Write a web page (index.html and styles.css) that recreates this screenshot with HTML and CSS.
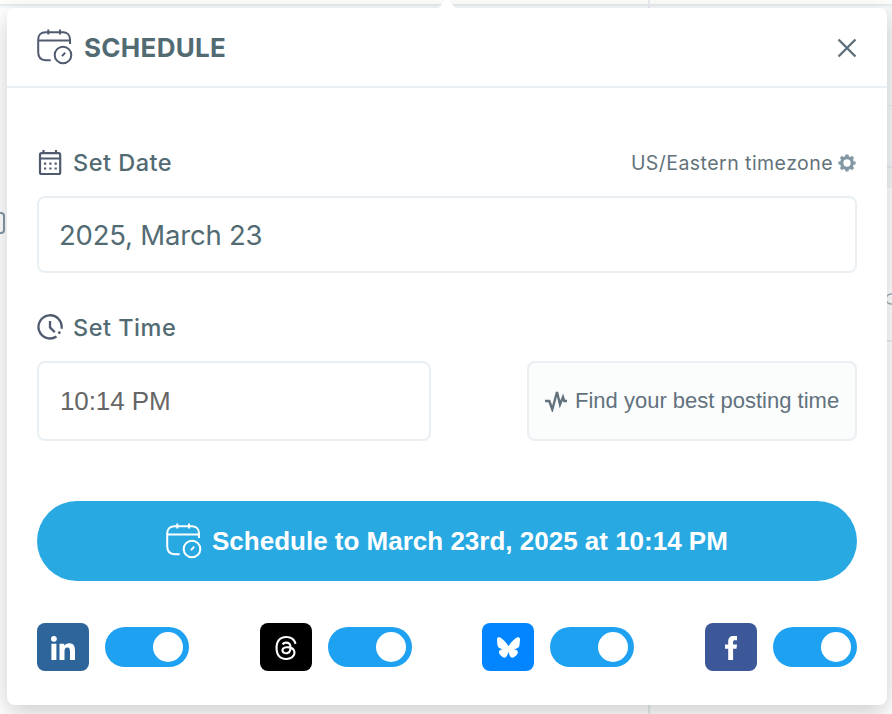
FILE: index.html
```html
<!DOCTYPE html>
<html lang="en">
<head>
<meta charset="utf-8">
<title>Schedule</title>
<link rel="stylesheet" href="styles.css">
</head>
<body>
<svg class="backdrop" width="892" height="714" viewBox="0 0 892 714" aria-hidden="true">
  <path fill="#fdfdfb" d="M0 0h892v4H0z"/>
  <path fill="#f6f8fa" d="M0 6h892v2H0zM886 8h6v159h-6z"/>
  <path fill="#e7edf0" d="M0 4h892v2H0zM648 0h2v714h-2zM880 105h12v1h-12zM880 166h12v2h-12zM880 340h12v2h-12z"/>
  <path fill="#f4f6f8" d="M880 168h12v20h-12z"/>
  <rect x="-12" y="213" width="16" height="20" rx="3" fill="none" stroke="#8297a6" stroke-width="2"/>
  <circle cx="891" cy="299" r="5" fill="none" stroke="#a0b0bb" stroke-width="1.5"/>
</svg>
<svg class="symbols" aria-hidden="true">
  <symbol id="schedule" viewBox="0 0 36 36">
    <g fill="none" stroke="currentColor" stroke-width="2">
      <path d="M33 15V10.500C33 6 30 3.200 26 3.200H8.500C4 3.200 1.200 6 1.200 10.500V23c0 5.500 2.500 8.200 7.500 8.200h5M1.200 11.500H33M11.300.500v5M23 .500v5"/>
      <circle cx="26" cy="26" r="8.300"/>
      <path d="M25 27.200l3.200-3.600"/>
    </g>
  </symbol>
</svg>
<main class="card">
  <header class="header">
    <svg class="icon-schedule" width="36" height="36"><use href="#schedule"/></svg>
    <h1 class="title">SCHEDULE</h1>
    <svg class="close" width="20" height="20" viewBox="0 0 20 20"><path d="M1.500 1.500l17 17M18.500 1.500l-17 17" fill="none" stroke="currentColor" stroke-width="2.300"/></svg>
  </header>
  <div class="body">
    <div class="label-row">
      <svg class="label-icon" width="26" height="26" viewBox="0 0 26 26">
        <g fill="none" stroke="currentColor" stroke-width="2.200">
          <rect x="3" y="3.200" width="20.200" height="20.800" rx="1.500"/>
          <path d="M3 8.500h20.500M6.500 0v4M19 0v4"/>
          <path d="M7 13.700h2.200m3.100 0h2.200m3.100 0h2.200M7 18.500h2.200m3.100 0h2.200m3.100 0h2.200"/>
        </g>
      </svg>
      <span class="label">Set Date</span>
      <span class="zone">US/Eastern timezone</span>
      <svg class="gear" width="18" height="18" viewBox="0 0 18 18">
        <circle cx="9" cy="9" r="5.300" fill="none" stroke="currentColor" stroke-width="3.300"/>
        <g stroke="currentColor" stroke-width="3.200"><path d="M9 .4v3M9 14.600v3M.4 9h3M14.600 9h3M2.900 2.900l2 2M13.100 13.100l2 2M2.900 15.100l2-2M13.100 4.900l2-2"/></g>
      </svg>
    </div>
    <div class="field date">2025, March 23</div>
    <div class="label-row time-label">
      <svg class="label-icon" width="26" height="26" viewBox="0 0 26 26">
        <path d="M19.500 22.500A11.600 11.600 0 1 1 24.500 14.800M13 7v6.400l4.800 4.800" fill="none" stroke="currentColor" stroke-width="2.300"/>
        <circle cx="22.300" cy="18.700" r="1.400" fill="currentColor"/>
      </svg>
      <span class="label">Set Time</span>
    </div>
    <div class="time-row">
      <div class="field time">10:14 PM</div>
      <div class="find">
        <svg width="22" height="22" viewBox="0 0 22 22"><path d="M0 11h4.300l3 8.500L12 2l3 12.500 3-7.500 1.300 4H22" fill="none" stroke="currentColor" stroke-width="2.400"/></svg>
        <span class="find-text">Find your best posting time</span>
      </div>
    </div>
    <div class="submit">
      <svg width="36" height="36"><use href="#schedule"/></svg>
      <span class="submit-text">Schedule to March 23rd, 2025 at 10:14 PM</span>
    </div>
    <div class="networks">
      <div class="network">
        <span class="logo linkedin"><svg width="52" height="48" viewBox="0 0 52 48"><circle cx="16.900" cy="15.800" r="2.900"/><path d="M14.400 20.700h5V37h-5zM22.500 20.700h4.800v2.200c.9-1.600 2.600-2.600 4.900-2.600 4.700 0 5.800 3 5.800 7.500V37h-5v-8.100c0-2.300-.3-4.300-2.700-4.300-2.300 0-2.800 1.900-2.800 4.200V37h-5z"/></svg></span>
        <span class="toggle"></span>
      </div>
      <div class="network">
        <span class="logo threads"><svg width="24" height="24" viewBox="0 0 24 24"><path d="M12.186 24h-.007c-3.581-.024-6.334-1.205-8.184-3.509C2.350 18.440 1.500 15.586 1.472 12.010v-.017c.030-3.579.879-6.430 2.525-8.482C5.845 1.205 8.600.024 12.180 0h.014c2.746.020 5.043.725 6.826 2.098 1.677 1.290 2.858 3.130 3.509 5.467l-2.040.569c-1.104-3.960-3.898-5.984-8.304-6.015-2.910.022-5.110.936-6.540 2.717C4.307 6.504 3.616 8.914 3.589 12c.027 3.086.718 5.496 2.057 7.164 1.430 1.783 3.631 2.698 6.540 2.717 2.623-.020 4.358-.631 5.800-2.045 1.647-1.613 1.618-3.593 1.090-4.798-.310-.710-.873-1.300-1.634-1.750-.192 1.352-.622 2.446-1.284 3.272-.886 1.102-2.140 1.704-3.730 1.790-1.202.065-2.361-.218-3.259-.801-1.063-.689-1.685-1.740-1.752-2.964-.065-1.190.408-2.285 1.330-3.082.880-.760 2.119-1.207 3.583-1.291a13.853 13.853 0 0 1 3.020.142c-.126-.742-.375-1.332-.750-1.757-.513-.586-1.308-.883-2.359-.890h-.029c-.844 0-1.992.232-2.721 1.320L7.734 7.847c.980-1.454 2.568-2.256 4.478-2.256h.044c3.194.020 5.097 1.975 5.287 5.388.108.046.216.094.321.142 1.490.700 2.580 1.761 3.154 3.070.797 1.820.871 4.790-1.548 7.158-1.850 1.810-4.094 2.628-7.277 2.650Zm1.003-11.690c-.242 0-.487.007-.739.021-1.836.103-2.980.946-2.916 2.143.067 1.256 1.452 1.839 2.784 1.767 1.224-.065 2.818-.543 3.086-3.710a10.500 10.500 0 0 0-2.215-.221z"/></svg></span>
        <span class="toggle"></span>
      </div>
      <div class="network">
        <span class="logo bluesky"><svg width="23" height="23" viewBox="0 0 24 24"><path d="M12 10.800c-1.087-2.114-4.046-6.053-6.798-7.995C2.566.944 1.561 1.266.902 1.565.139 1.908 0 3.080 0 3.768c0 .690.378 5.650.624 6.479.815 2.736 3.713 3.660 6.383 3.364-3.912.580-7.387 2.005-2.830 7.078 5.013 5.190 6.870-1.113 7.823-4.308.953 3.195 2.050 9.271 7.733 4.308 4.267-4.308 1.172-6.498-2.740-7.078 2.670.297 5.568-.628 6.383-3.364.246-.828.624-5.790.624-6.478 0-.690-.139-1.861-.902-2.206-.659-.298-1.664-.620-4.300 1.240C16.046 4.748 13.087 8.687 12 10.800Z"/></svg></span>
        <span class="toggle"></span>
      </div>
      <div class="network">
        <span class="logo facebook"><svg width="52" height="48" viewBox="0 0 52 48"><path d="M23.200 37V25.800H20v-4.300h3.200v-2.800c0-3.900 1.700-5.700 5.500-5.700H32v4.200h-2c-1.500 0-1.900.6-1.900 1.900v2.400h3.900l-.5 4.300h-3.400V37z"/></svg></span>
        <span class="toggle"></span>
      </div>
    </div>
  </div>
</main>
<svg class="pointer" width="22" height="9" viewBox="0 0 22 9" aria-hidden="true"><path d="M0 9Q2 8.500 4 6.500L10-1h2l6 7.500q2 2 4 2.500z" fill="#fff"/></svg>
</body>
</html>
```
FILE: styles.css
```css
* { box-sizing: border-box; }
body {
  margin: 0;
  padding: 8px 5px 9px 7px;
  width: 892px;
  height: 714px;
  overflow: hidden;
  background: #fff;
  font-family: Inter, sans-serif;
  color: #526b73;
}
svg { display: block; flex: none; }
.backdrop { position: absolute; left: 0; top: 0; }
.symbols { position: absolute; width: 0; height: 0; }
.pointer { position: absolute; left: 436px; top: 0; }
.card {
  position: relative;
  width: 880px;
  height: 697px;
  border-radius: 8px;
  background: #fff;
  box-shadow: 0 8px 24px rgba(0, 0, 0, .2);
}
.header {
  display: flex;
  align-items: center;
  height: 80px;
  padding: 0 30px;
  border-bottom: 2px solid #e9eff2;
}
.icon-schedule { color: #505b70; }
.title {
  margin: 2px 0 0 11px;
  font-size: 26px;
  line-height: 32px;
  font-weight: 700;
  letter-spacing: .3px;
}
.close { margin: 2px 0 0 auto; color: #5c6d79; }
.body { padding: 58px 30px 0; }
.label-row { display: flex; align-items: center; height: 34px; white-space: nowrap; }
.label-icon { color: #505b70; }
.label { margin: -1px 0 0 10px; font-size: 23.5px; font-weight: 500; letter-spacing: .5px; }
.zone { margin-left: auto; font-size: 19.5px; letter-spacing: .45px; color: #62727a; }
.gear { margin: -1px 1px 0 5px; color: #8297a3; }
.field {
  display: flex;
  align-items: center;
  padding-left: 21px;
  border: 2px solid #e9eff2;
  border-radius: 8px;
}
.date { height: 77px; margin-top: 16px; padding: 1px 0 0 20px; font-size: 27.5px; letter-spacing: -.2px; }
.time-label { margin-top: 37px; }
.time-label .label { margin-top: 1px; }
.time-row { display: flex; justify-content: space-between; margin-top: 17px; }
.time { width: 394px; height: 80px; font: 26px "Liberation Sans", sans-serif; letter-spacing: -.1px; color: #666; }
.find {
  display: flex;
  align-items: center;
  width: 330px;
  height: 80px;
  padding-left: 16px;
  border: 2px solid #e9eff2;
  border-radius: 8px;
  background: #fbfdfd;
  color: #62727d;
}
.find-text { margin-left: 8px; font: 22px "Liberation Sans", sans-serif; white-space: nowrap; }
.submit {
  display: flex;
  align-items: center;
  height: 80px;
  margin-top: 60px;
  padding-left: 129px;
  border-radius: 40px;
  background: #28a9e2;
  color: #fff;
}
.submit-text { margin-left: 10px; font: bold 26px "Liberation Sans", sans-serif; white-space: nowrap; }
.networks { display: flex; justify-content: space-between; margin-top: 42px; }
.network { display: flex; align-items: center; gap: 16px; }
.logo {
  display: flex;
  align-items: center;
  justify-content: center;
  width: 52px;
  height: 48px;
  border-radius: 8px;
  fill: #fff;
}
.linkedin { background: #2d6499; }
.threads { background: #000; }
.threads svg { margin-top: 2px; }
.bluesky { background: #0385ff; }
.bluesky svg { margin-top: 1px; }
.facebook { background: #3c5898; }
.toggle {
  display: flex;
  align-items: center;
  justify-content: flex-end;
  width: 84px;
  height: 40px;
  padding-right: 6px;
  border-radius: 20px;
  background: #1fa1f2;
}
.toggle::after { content: ""; width: 30px; height: 30px; border-radius: 50%; background: #fff; }
```
